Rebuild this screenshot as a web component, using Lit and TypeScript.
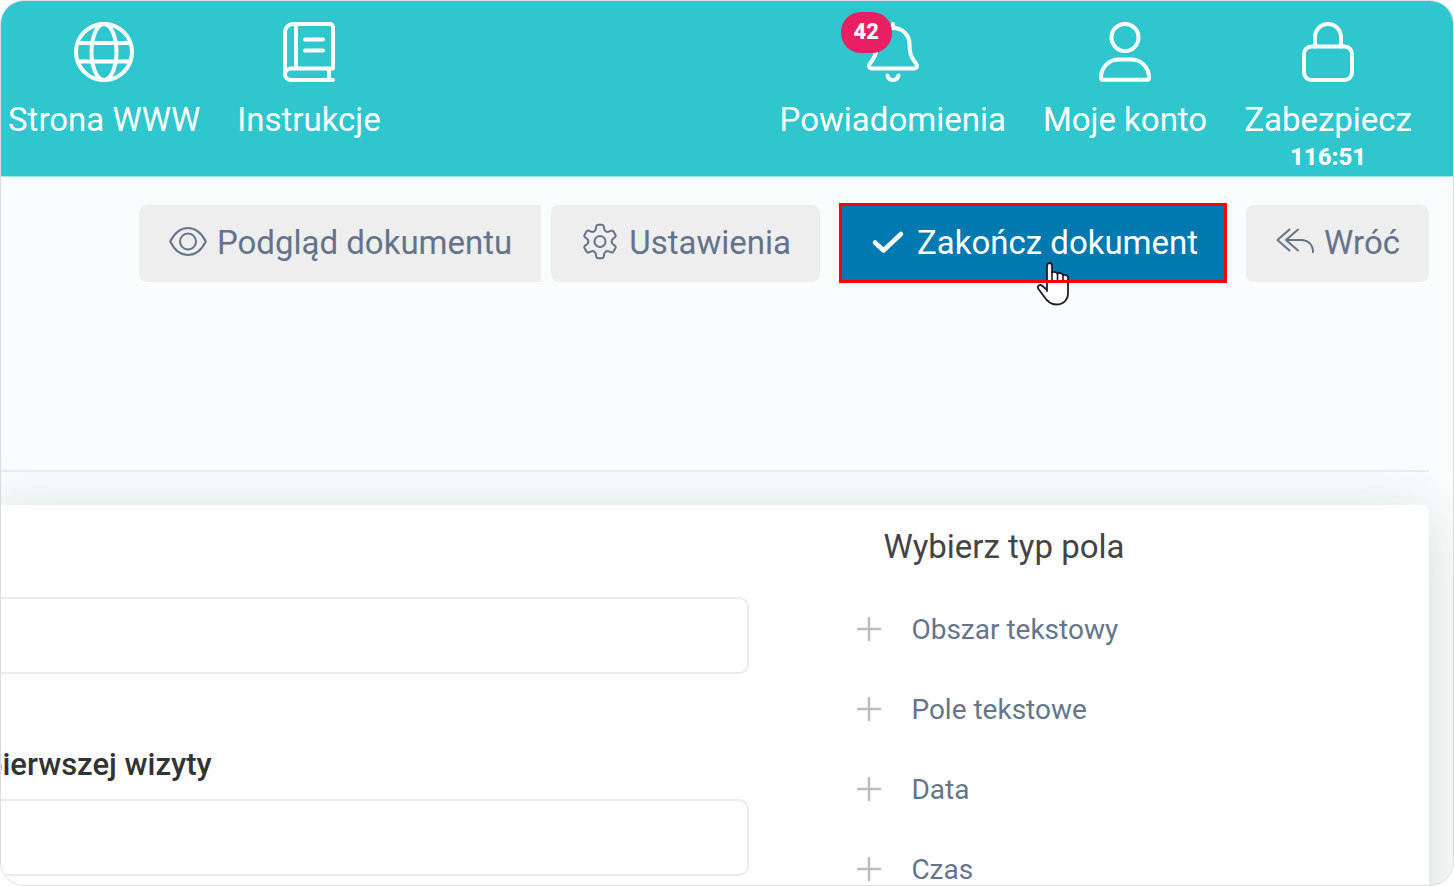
import { LitElement, html, svg, css } from "lit";
import { customElement } from "lit/decorators.js";

// Outline of a cog with six teeth, centred in a 38 x 38 box.
const cogPath = (() => {
  const point = (deg: number, r: number) => {
    const a = (deg * Math.PI) / 180;
    return `${(19 + r * Math.cos(a)).toFixed(2)} ${(18.5 + r * Math.sin(a)).toFixed(2)}`;
  };
  let d = "";
  for (let i = 0; i < 6; i++) {
    const t = i * 60 - 90;
    d += `${i ? "L" : "M"}${point(t - 20, 12.6)}L${point(t - 14, 15.6)}Q${point(t - 12, 17)} ${point(t - 6, 16.8)}`;
    d += `L${point(t + 6, 16.8)}Q${point(t + 12, 17)} ${point(t + 14, 15.6)}L${point(t + 20, 12.6)}`;
    d += `Q${point(t + 30, 10.8)} ${point(t + 40, 12.6)}`;
  }
  return d + "Z";
})();

const icons = {
  globe: svg`<circle cx="30" cy="30" r="28"/><ellipse cx="30" cy="30" rx="12.5" ry="28"/><path d="M4 21h52M4 39.500h52"/>`,
  book: svg`<path d="M54 46.500V5a3 3 0 0 0-3-3H14a8 8 0 0 0-8 8v42a6 6 0 0 0 6 6h42M6 52a6 6 0 0 1 6-5.500h42M17 2v44.500M50 46.500V58M26 17.500h18M26 28.500h18"/>`,
  bell: svg`<path d="M30 2v4M30 6C20 6 13.500 13.500 13.500 22c0 11-2.500 14.500-6.500 19.500-2 2.500-.800 5 2 5h42c2.800 0 4-2.500 2-5-4-5-6.500-8.500-6.500-19.500C46.500 13.500 40 6 30 6ZM24.500 53.500c1.500 6 9.500 6 11 0"/>`,
  user: svg`<circle cx="30" cy="15.500" r="13.500"/><path d="M6 55.500C6 45 14 37.500 24 37.500h12c10 0 18 7.500 18 18 0 1.500-.800 2.300-2 2.300H8c-1.200 0-2-.800-2-2.300Z"/>`,
  lock: svg`<rect x="6" y="24.500" width="48" height="33.500" rx="7.500"/><path d="M17 24.500V15a13 13 0 0 1 26 0v9.500"/>`,
  eye: svg`<path d="M1.200 18.500C5 11 11.500 5 19 5s14 6 17.800 13.500C33 26 26.500 32 19 32S5 26 1.200 18.500Z"/><circle cx="19" cy="18.500" r="8"/>`,
  cog: svg`<path d=${cogPath}/><circle cx="19" cy="18.500" r="5.500"/>`,
  check: svg`<path d="M6 19.500l8.500 8L32 11" stroke-width="4.500"/>`,
  replyAll: svg`<path d="M13.500 6.500L1.500 17l12 10.500M22 6.500L10 17l12 10.500M10.500 17H25c7.500 0 12 5 12 12"/>`,
  plus: svg`<path d="M12 1v22M1 12h22"/>`,
};

@customElement("app-root")
export class AppRoot extends LitElement {
  static styles = css`
    :host {
      display: block;
      font-family: Roboto, "Liberation Sans", sans-serif;
      background: #fff;
    }
    * {
      box-sizing: border-box;
    }
    svg {
      display: block;
      fill: none;
      stroke: currentColor;
      stroke-linecap: round;
      stroke-linejoin: round;
    }
    button {
      font: inherit;
      color: inherit;
      border: 0;
      background: none;
      cursor: pointer;
    }
    .frame {
      height: 100vh;
      border: 1px solid #dcdcdc;
      border-radius: 24px;
      overflow: hidden;
      background: #f9fdfe;
    }
    .topbar {
      display: flex;
      justify-content: space-between;
      height: 176px;
      padding: 21px 41px 0 7px;
      background: #2fc6ce;
      border-bottom: 1px solid #a4e5e9;
      color: #fff;
    }
    .nav {
      display: flex;
      align-items: flex-start;
      gap: 37px;
    }
    .item {
      display: flex;
      flex-direction: column;
      align-items: center;
      color: inherit;
      text-decoration: none;
      font-size: 33px;
      line-height: 40px;
      white-space: nowrap;
    }
    .item svg {
      width: 60px;
      height: 60px;
      stroke-width: 4;
    }
    .caption {
      margin-top: 18px;
    }
    .timer {
      font-size: 24px;
      line-height: 34px;
      font-weight: 800;
    }
    .glyph {
      position: relative;
    }
    .badge {
      position: absolute;
      left: -22px;
      top: -10px;
      width: 51px;
      height: 41px;
      border-radius: 20px;
      background: #e91e63;
      font-size: 22px;
      line-height: 39px;
      font-weight: 800;
      text-align: center;
    }
    .content {
      padding: 26px 24px 0 0;
    }
    .toolbar {
      display: flex;
      justify-content: flex-end;
      align-items: center;
      gap: 19px;
      height: 80px;
    }
    .group {
      display: flex;
      gap: 10px;
    }
    .btn {
      display: flex;
      align-items: center;
      gap: 10px;
      height: 77px;
      padding: 0 29px 0 30px;
      border-radius: 8px;
      background: #eee;
      color: #65738a;
      font-size: 33px;
      line-height: 40px;
      white-space: nowrap;
    }
    .btn svg {
      width: 38px;
      height: 38px;
      margin-bottom: 2px;
      stroke-width: 2;
    }
    .joined {
      border-radius: 8px 0 0 8px;
    }
    .highlight {
      position: relative;
    }
    .highlight::after {
      content: "";
      position: absolute;
      inset: 0;
      border: 3px solid #f00;
      pointer-events: none;
    }
    .primary {
      height: 80px;
      border-radius: 4px;
      background: #0078b0;
      color: #fff;
    }
    .pointer {
      position: absolute;
      left: 197px;
      top: 59px;
      width: 34px;
      height: 44px;
      pointer-events: none;
    }
    .rule {
      height: 2px;
      margin: 187px 0 33px;
      border: 0;
      background: #eceeef;
    }
    .card {
      display: grid;
      grid-template-columns: minmax(0, 3fr) minmax(0, 2fr);
      min-height: 600px;
      margin-left: -16px;
      border-radius: 8px;
      background: #fff;
      box-shadow: 0 10px 60px rgba(40, 50, 50, 0.17);
    }
    .form {
      display: flex;
      flex-direction: column;
      padding: 92px 102px 0 0;
    }
    .label {
      margin-top: 68px;
      padding-bottom: 11px;
      font-size: 31px;
      line-height: 46px;
      font-weight: 500;
      color: #333;
    }
    .field {
      width: 100%;
      height: 77px;
      padding: 0 24px;
      border: 2px solid #e8ecf1;
      border-radius: 10px;
      background: #fff;
      font: inherit;
      font-size: 30px;
      color: #333;
      outline: none;
    }
    .types {
      padding: 20px 0 0 6px;
    }
    .title {
      margin: 0 0 20px 26px;
      font-size: 33px;
      line-height: 44px;
      font-weight: 400;
      color: #444;
    }
    .list {
      margin: 0;
      padding: 0;
      list-style: none;
    }
    .type {
      display: flex;
      align-items: center;
      gap: 30px;
      width: 100%;
      height: 80px;
      padding: 0;
      font-size: 28px;
      color: #65758a;
      text-align: left;
    }
    .type svg {
      width: 24px;
      height: 24px;
      stroke: #bbb;
      stroke-width: 2.5;
    }
  `;

  private icon(name: keyof typeof icons, size: number) {
    return html`<svg viewBox="0 0 ${size} ${size}" aria-hidden="true">${icons[name]}</svg>`;
  }

  render() {
    return html`
      <div class="frame">
        <header class="topbar">
          <nav class="nav">
            <a class="item" href="#www">${this.icon("globe", 60)}<span class="caption">Strona WWW</span></a>
            <a class="item" href="#instrukcje">${this.icon("book", 60)}<span class="caption">Instrukcje</span></a>
          </nav>
          <nav class="nav">
            <a class="item" href="#powiadomienia">
              <span class="glyph">${this.icon("bell", 60)}<span class="badge">42</span></span>
              <span class="caption">Powiadomienia</span>
            </a>
            <a class="item" href="#konto">${this.icon("user", 60)}<span class="caption">Moje konto</span></a>
            <a class="item" href="#zabezpiecz">
              ${this.icon("lock", 60)}<span class="caption">Zabezpiecz</span><span class="timer">116:51</span>
            </a>
          </nav>
        </header>
        <main class="content">
          <div class="toolbar">
            <div class="group">
              <button class="btn joined" type="button">${this.icon("eye", 38)}<span>Podgląd dokumentu</span></button>
              <button class="btn" type="button">${this.icon("cog", 38)}<span>Ustawienia</span></button>
            </div>
            <div class="highlight">
              <button class="btn primary" type="button">${this.icon("check", 38)}<span>Zakończ dokument</span></button>
              <svg class="pointer" viewBox="0 0 34 44" aria-hidden="true">
                <path
                  d="M11 29V4c0-4 5-4 5 0v7c0-1.500 5.500-1.500 5.500 1 0-1.500 5.500-1.500 5.500 1.500 0-1 5-1 5 2V31c0 7-4.500 11.500-12 11.500-6 0-9-3.500-12-8L2.500 27c-2-3.500 1.500-5 4-3l4.500 4"
                  fill="#fff" stroke="#1b1b2b" stroke-width="1.800"/>
                <path d="M16 11v8M21.500 12v7M27 13.500v6" stroke="#1b1b2b" stroke-width="1.600"/>
              </svg>
            </div>
            <button class="btn" type="button">${this.icon("replyAll", 38)}<span>Wróć</span></button>
          </div>
          <hr class="rule" />
          <section class="card">
            <form class="form">
              <input class="field" type="text" aria-label="Pole tekstowe" />
              <label class="label" for="visit">pierwszej wizyty</label>
              <input class="field" id="visit" type="text" />
            </form>
            <aside class="types">
              <h2 class="title">Wybierz typ pola</h2>
              <ul class="list">
                ${["Obszar tekstowy", "Pole tekstowe", "Data", "Czas"].map(
                  (name) => html`<li><button class="type" type="button">${this.icon("plus", 24)}<span>${name}</span></button></li>`
                )}
              </ul>
            </aside>
          </section>
        </main>
      </div>
    `;
  }
}
